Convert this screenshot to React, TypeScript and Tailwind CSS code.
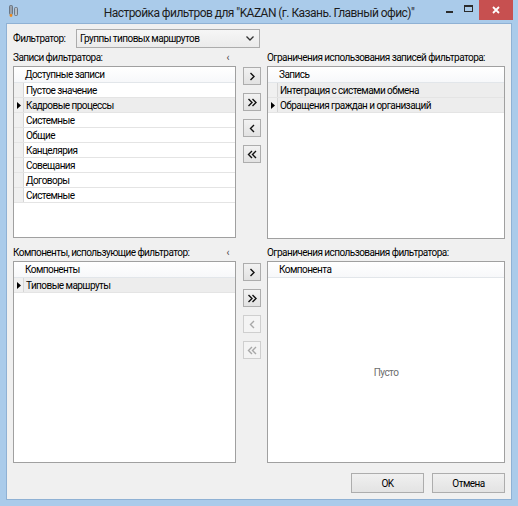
import React from "react";

type Row = { text: string; selected?: boolean; focused?: boolean };

const T = "text-[10px] leading-[13px] tracking-[-0.55px]";

const Tri = () => (
  <svg width="4" height="7" viewBox="0 0 4 7">
    <polygon points="0,0 4,3.5 0,7" fill="#000" />
  </svg>
);

function Grid({
  header,
  rows,
  selector = true,
  empty,
}: {
  header: string;
  rows: Row[];
  selector?: boolean;
  empty?: string;
}) {
  return (
    <div className="h-full border border-[#a0a0a0] bg-white flex flex-col overflow-hidden">
      <div className="h-[16px] shrink-0 flex items-center border-b border-[#e2e6ea] bg-gradient-to-b from-white to-[#f7f8fa] pl-[11px]">
        <span className={T}>{header}</span>
      </div>
      {rows.map((r, i) => (
        <div
          key={i}
          className={`h-[15px] shrink-0 flex border-b border-[#e4e4e4] ${
            r.selected ? "bg-[#ededed]" : "bg-white"
          }`}
        >
          {selector && (
            <div className="w-[10px] shrink-0 bg-[#f0f0f0] border-r border-[#d6d6d6] flex items-center justify-center">
              {r.focused && <Tri />}
            </div>
          )}
          <div className={`pl-[2px] flex items-center whitespace-nowrap ${T}`}>{r.text}</div>
        </div>
      ))}
      {empty && (
        <div className={`flex-1 flex items-center justify-center text-[#6d6d6d] pt-[4px] ${T}`}>
          {empty}
        </div>
      )}
    </div>
  );
}

function Chev({ double, left }: { double?: boolean; left?: boolean }) {
  const pts = left ? "5,1 1.5,4.5 5,8" : "1.5,1 5,4.5 1.5,8";
  return (
    <svg width={double ? 10 : 7} height="9" viewBox={double ? "0 0 10 9" : "0 0 7 9"}>
      <polyline points={pts} fill="none" stroke="currentColor" strokeWidth="1.4" />
      {double && (
        <polyline
          points={left ? "9,1 5.5,4.5 9,8" : "5.5,1 9,4.5 5.5,8"}
          fill="none"
          stroke="currentColor"
          strokeWidth="1.4"
        />
      )}
    </svg>
  );
}

function ArrowBtn({
  double,
  left,
  disabled,
}: {
  double?: boolean;
  left?: boolean;
  disabled?: boolean;
}) {
  return (
    <div
      className={`w-[18px] h-[18px] border flex items-center justify-center ${
        disabled
          ? "border-[#cfcfcf] bg-[#f4f4f4] text-[#a8a8a8]"
          : "border-[#adadad] bg-gradient-to-b from-[#f2f2f2] to-[#e2e2e2] text-[#111]"
      }`}
    >
      <Chev double={double} left={left} />
    </div>
  );
}

function BtnColumn({ disabledBack, top }: { disabledBack?: boolean; top: string }) {
  return (
    <div className={`flex flex-col gap-[8px] pl-[7px] ${top}`}>
      <ArrowBtn />
      <ArrowBtn double />
      <ArrowBtn left disabled={disabledBack} />
      <ArrowBtn left double disabled={disabledBack} />
    </div>
  );
}

export default function App() {
  const left1: Row[] = [
    { text: "Пустое значение" },
    { text: "Кадровые процессы", selected: true, focused: true },
    { text: "Системные" },
    { text: "Общие" },
    { text: "Канцелярия" },
    { text: "Совещания" },
    { text: "Договоры" },
    { text: "Системные" },
  ];
  const right1: Row[] = [
    { text: "Интеграция с системами обмена", selected: true },
    { text: "Обращения граждан и организаций", selected: true, focused: true },
  ];
  const left2: Row[] = [{ text: "Типовые маршруты", selected: true, focused: true }];

  return (
    <div className="w-[518px] h-[506px] bg-[#aacbea] flex flex-col font-['Roboto',sans-serif] text-black">
      {/* Title bar */}
      <div className="h-[23px] shrink-0 relative flex items-center justify-center">
        <div className="absolute left-[9px] top-[5px]">
          <svg width="10" height="12" viewBox="0 0 10 12">
            <rect x="0.5" y="0.5" width="3" height="9" rx="1" fill="#9aa3ad" stroke="#5d6670" strokeWidth="0.8" />
            <rect x="5.5" y="2.5" width="3" height="8" rx="1" fill="#b8c0c8" stroke="#5d6670" strokeWidth="0.8" />
            <circle cx="2" cy="10.5" r="1.4" fill="#f08a1a" />
          </svg>
        </div>
        <span className="text-[12px] leading-[16px] tracking-[-0.55px] text-[#1d1d1d] mt-[2px]">
          Настройка фильтров для "KAZAN (г. Казань. Главный офис)"
        </span>
        <div className="absolute left-[446px] top-[11px] w-[7px] h-[2px] bg-[#2b2b2b]" />
        <div className="absolute left-[464px] top-[5px] w-[9px] h-[7px] border border-[#2b2b2b] border-t-2" />
        <div className="absolute left-[479px] top-0 w-[34px] h-[20px] bg-[#c75050] flex items-center justify-center">
          <svg width="8" height="8" viewBox="0 0 8 8">
            <path d="M1 1 L7 7 M7 1 L1 7" stroke="#fff" strokeWidth="1.8" />
          </svg>
        </div>
      </div>

      {/* Client */}
      <div className="flex-1 mx-[6px] mb-[6px] border border-[#8fb1d4] bg-[#f0f0f0] flex flex-col px-[6px]">
        <div className="mt-[5px] h-[19px] flex items-center">
          <span className={`w-[63px] ${T}`}>Фильтратор:</span>
          <div className="w-[184px] h-[19px] border border-[#acacac] bg-gradient-to-b from-[#f6f6f6] to-[#ebebeb] flex items-center justify-between pl-[3px] pr-[5px]">
            <span className={T}>Группы типовых маршрутов</span>
            <svg width="8" height="5" viewBox="0 0 8 5">
              <polyline points="0.5,0.5 4,4 7.5,0.5" fill="none" stroke="#333" strokeWidth="1.3" />
            </svg>
          </div>
        </div>

        <div className="h-[18px] grid grid-cols-[223px_31px_238px] items-center">
          <div className={`flex justify-between pr-[7px] ${T}`}>
            <span>Записи фильтратора:</span>
            <span className="text-[#444]">‹</span>
          </div>
          <div />
          <span className={`whitespace-nowrap ${T}`}>Ограничения использования записей фильтратора:</span>
        </div>

        <div className="h-[173px] grid grid-cols-[223px_31px_238px]">
          <div className="h-[172px]">
            <Grid header="Доступные записи" rows={left1} />
          </div>
          <BtnColumn top="pt-[1px]" />
          <Grid header="Запись" rows={right1} />
        </div>

        <div className="h-[22px] grid grid-cols-[223px_31px_238px] items-center pt-[4px]">
          <div className={`flex justify-between pr-[7px] ${T}`}>
            <span className="whitespace-nowrap">Компоненты, использующие фильтратор:</span>
            <span className="text-[#444]">‹</span>
          </div>
          <div />
          <span className={`whitespace-nowrap ${T}`}>Ограничения использования фильтратора:</span>
        </div>

        <div className="h-[202px] grid grid-cols-[223px_31px_238px]">
          <Grid header="Компоненты" rows={left2} />
          <BtnColumn top="pt-[2px]" disabledBack />
          <Grid header="Компонента" rows={[]} empty="Пусто" />
        </div>

        <div className="mt-[10px] flex justify-end gap-[8px]">
          <div className={`w-[73px] h-[20px] border border-[#adadad] bg-gradient-to-b from-[#f0f0f0] to-[#e3e3e3] flex items-center justify-center ${T}`}>
            OK
          </div>
          <div className={`w-[73px] h-[20px] border border-[#adadad] bg-gradient-to-b from-[#f0f0f0] to-[#e3e3e3] flex items-center justify-center ${T}`}>
            Отмена
          </div>
        </div>
      </div>
    </div>
  );
}
